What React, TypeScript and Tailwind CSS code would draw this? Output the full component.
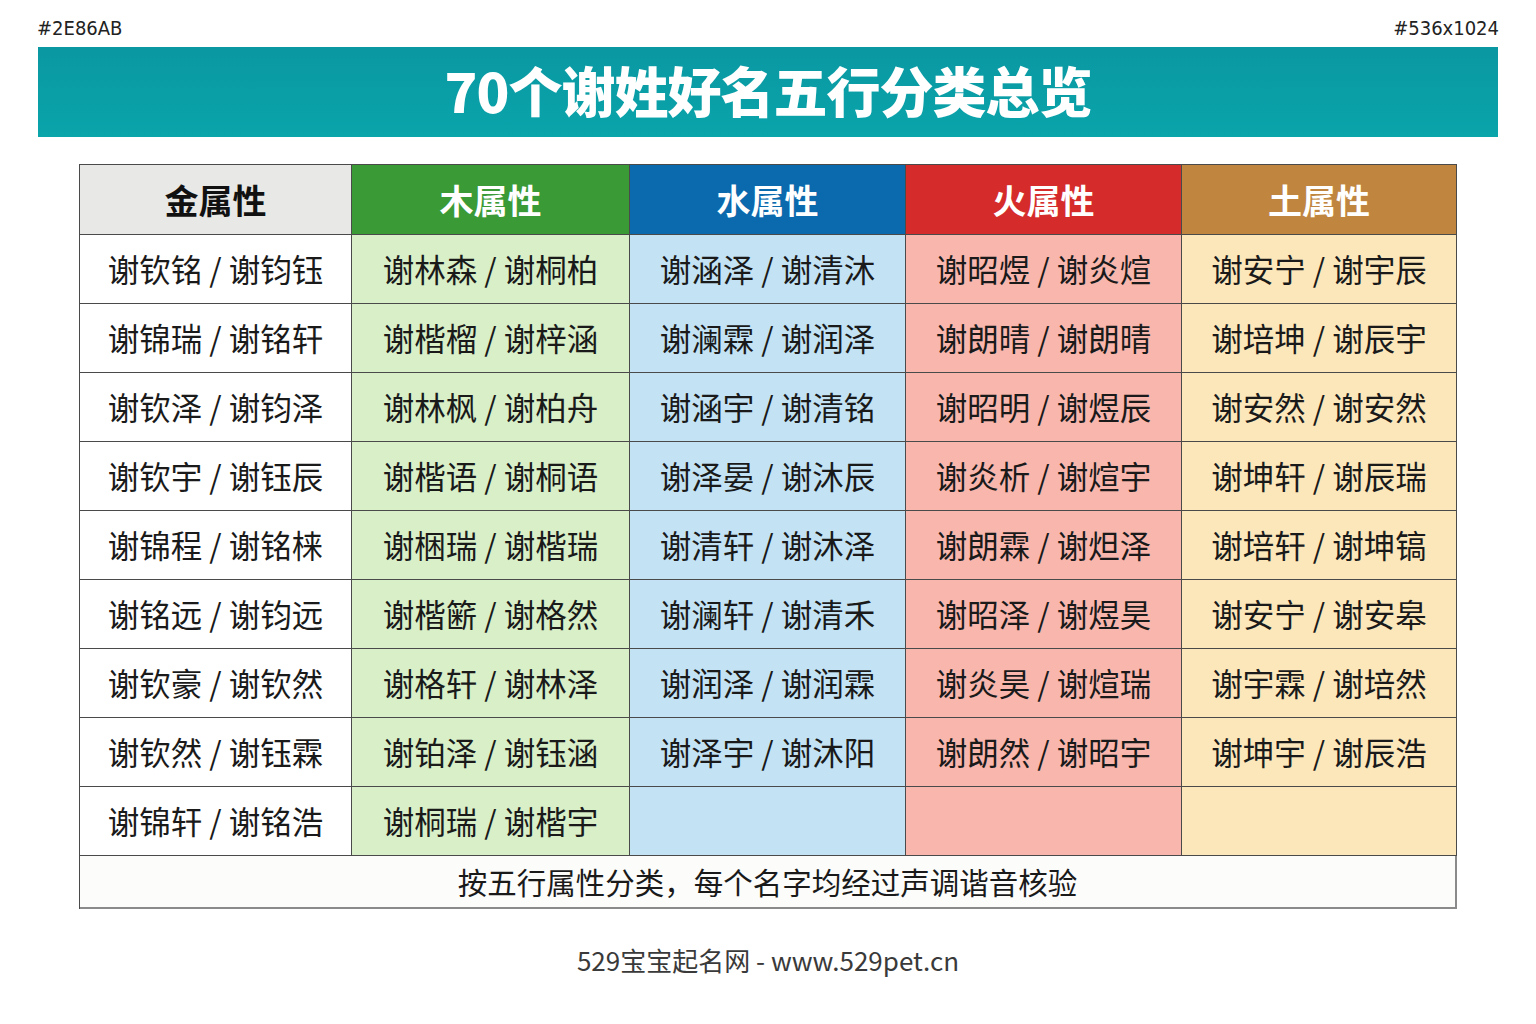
import React from "react";

const cjk = '"Noto Sans CJK SC", "Noto Sans", sans-serif';

type Col = {
  title: string;
  head: string;
  headText: string;
  body: string;
  names: string[];
};

const cols: Col[] = [
  {
    title: "金属性",
    head: "bg-[#e8e8e6]",
    headText: "text-[#111]",
    body: "bg-white",
    names: [
      "谢钦铭 / 谢钧钰",
      "谢锦瑞 / 谢铭轩",
      "谢钦泽 / 谢钧泽",
      "谢钦宇 / 谢钰辰",
      "谢锦程 / 谢铭梾",
      "谢铭远 / 谢钧远",
      "谢钦豪 / 谢钦然",
      "谢钦然 / 谢钰霖",
      "谢锦轩 / 谢铭浩",
    ],
  },
  {
    title: "木属性",
    head: "bg-[#3a9a36]",
    headText: "text-white",
    body: "bg-[#d8efc8]",
    names: [
      "谢林森 / 谢桐柏",
      "谢楷榴 / 谢梓涵",
      "谢林枫 / 谢柏舟",
      "谢楷语 / 谢桐语",
      "谢梱瑞 / 谢楷瑞",
      "谢楷簖 / 谢格然",
      "谢格轩 / 谢林泽",
      "谢铂泽 / 谢钰涵",
      "谢桐瑞 / 谢楷宇",
    ],
  },
  {
    title: "水属性",
    head: "bg-[#0b69ad]",
    headText: "text-white",
    body: "bg-[#c3e3f5]",
    names: [
      "谢涵泽 / 谢清沐",
      "谢澜霖 / 谢润泽",
      "谢涵宇 / 谢清铭",
      "谢泽晏 / 谢沐辰",
      "谢清轩 / 谢沐泽",
      "谢澜轩 / 谢清禾",
      "谢润泽 / 谢润霖",
      "谢泽宇 / 谢沐阳",
      "",
    ],
  },
  {
    title: "火属性",
    head: "bg-[#d52b2b]",
    headText: "text-white",
    body: "bg-[#f9b6ad]",
    names: [
      "谢昭煜 / 谢炎煊",
      "谢朗晴 / 谢朗晴",
      "谢昭明 / 谢煜辰",
      "谢炎析 / 谢煊宇",
      "谢朗霖 / 谢炟泽",
      "谢昭泽 / 谢煜昊",
      "谢炎昊 / 谢煊瑞",
      "谢朗然 / 谢昭宇",
      "",
    ],
  },
  {
    title: "土属性",
    head: "bg-[#c0863f]",
    headText: "text-white",
    body: "bg-[#fce7bb]",
    names: [
      "谢安宁 / 谢宇辰",
      "谢培坤 / 谢辰宇",
      "谢安然 / 谢安然",
      "谢坤轩 / 谢辰瑞",
      "谢培轩 / 谢坤镐",
      "谢安宁 / 谢安皋",
      "谢宇霖 / 谢培然",
      "谢坤宇 / 谢辰浩",
      "",
    ],
  },
];

export default function App() {
  return (
    <div className="w-[1536px] h-[1024px] bg-white flex flex-col" style={{ fontFamily: cjk }}>
      {/* top labels */}
      <div
        className="mt-[16px] h-[24px] px-[37px] flex items-center justify-between text-[20px] text-[#222]"
        style={{ fontFamily: '"Liberation Sans Narrow", "DejaVu Sans Condensed", "Liberation Sans", sans-serif' }}
      >
        <span>#2E86AB</span>
        <span>#536x1024</span>
      </div>

      {/* banner */}
      <div className="mt-[7px] mx-[38px] h-[90px] bg-gradient-to-b from-[#0a98a2] to-[#0aa4ab] flex items-center justify-center">
        <h1 className="text-white text-[54px] font-black tracking-[-1px] leading-none -mt-[4px]">
          70个谢姓好名五行分类总览
        </h1>
      </div>

      {/* table */}
      <div className="mt-[27px] ml-[79px] w-[1378px] border-l border-t border-[#4a4a4a]">
        <div className="grid grid-cols-[272px_278px_276px_276px_275px]">
          {cols.map((c) => (
            <div
              key={c.title}
              className={`h-[70px] flex items-center justify-center border-r border-b border-[#4a4a4a] text-[34px] font-bold ${c.head} ${c.headText}`}
            >
              {c.title}
            </div>
          ))}
          {Array.from({ length: 9 }).map((_, r) =>
            cols.map((c) => (
              <div
                key={c.title + r}
                className={`h-[69px] flex items-center justify-center border-r border-b border-[#4a4a4a] text-[31.5px] text-[#1a1a1a] ${c.body}`}
              >
                {c.names[r]}
              </div>
            ))
          )}
        </div>
        <div className="h-[53px] flex items-center justify-center border-r-2 border-b-2 border-[#8a8a8a] bg-[#fcfcfa] text-[29.5px] text-[#1a1a1a]">
          按五行属性分类，每个名字均经过声调谐音核验
        </div>
      </div>

      {/* credit */}
      <div className="mt-[35px] text-center text-[26px] leading-[32px] text-[#3a3a3a]">
        529宝宝起名网 - www.529pet.cn
      </div>
    </div>
  );
}
